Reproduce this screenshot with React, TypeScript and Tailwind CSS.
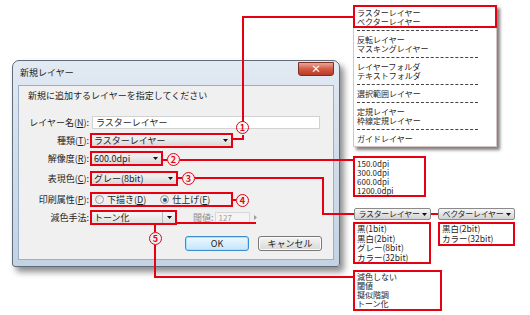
import React from "react";

function Arrow({ color = "#111" }: { color?: string }) {
  return (
    <svg width="5" height="3" viewBox="0 0 5 3" className="shrink-0">
      <path d="M0 0H5L2.5 3Z" fill={color} />
    </svg>
  );
}

function RedBox({ className, children }: { className?: string; children?: React.ReactNode }) {
  return <div className={`border-2 border-[#e60012] ${className ?? ""}`}>{children}</div>;
}

function Select({ text }: { text: string }) {
  return (
    <div className="h-full flex items-center justify-between pl-[2px] pr-[3px] bg-gradient-to-b from-[#f6f6f6] to-[#d9d9d9]">
      <span>{text}</span>
      <Arrow />
    </div>
  );
}

function Label({ children }: { children: React.ReactNode }) {
  return <div className="w-[71px] pr-[1px] text-right shrink-0">{children}</div>;
}

function Radio({ checked }: { checked?: boolean }) {
  return (
    <span className="w-[9px] h-[9px] rounded-full border border-[#9a9a9a] bg-gradient-to-br from-[#dedede] to-[#ffffff] flex items-center justify-center shrink-0">
      {checked && <span className="w-[4px] h-[4px] rounded-full bg-[#24548a]" />}
    </span>
  );
}

function Circle({ n, className }: { n: string; className: string }) {
  return (
    <span
      className={`absolute w-[13px] h-[13px] rounded-full border-[1.5px] border-[#e60012] text-[#e60012] text-[9px] leading-none font-bold flex items-center justify-center ${className}`}
    >
      {n}
    </span>
  );
}

function Sep() {
  return (
    <div className="h-[9px] flex items-center">
      <div className="w-[121px] border-t border-dashed border-[#444]" />
    </div>
  );
}

function LayerButton({ text, className }: { text: string; className: string }) {
  return (
    <div
      className={`absolute h-[12px] rounded-[2px] border border-[#8a8a8a] bg-gradient-to-b from-[#f6f6f6] to-[#d2d2d2] flex items-center justify-center gap-[2px] text-[8px] leading-none tracking-[-0.3px] ${className}`}
    >
      <span>{text}</span>
      <Arrow />
    </div>
  );
}

export default function App() {
  return (
    <div className="relative w-[530px] h-[315px] bg-white overflow-hidden font-['Noto_Sans_CJK_JP',sans-serif] text-[#1e1e1e]">
      {/* dialog window */}
      <div className="absolute left-[12px] top-[60px] w-[328px] h-[207px] rounded-t-[7px] rounded-b-[3px] border border-[#5f6c7a] bg-gradient-to-b from-[#e2eaf3] via-[#d0dcea] to-[#c3d3e4] shadow-[4px_5px_6px_rgba(0,0,0,0.45)] flex flex-col">
        <div className="relative h-[24px] flex items-center pl-[7px] text-[9px]">
          新規レイヤー
          <div className="absolute right-[5px] top-[1px] w-[36px] h-[14px] rounded-b-[3px] border border-[#7a3024] bg-gradient-to-b from-[#eaa596] via-[#d35a45] to-[#b93a24] flex items-center justify-center text-white text-[10px] font-bold leading-none">
            ×
          </div>
        </div>

        <div className="flex-1 mx-[5px] mb-[6px] bg-[#f0f0f0] border border-[#9bb0c7] flex flex-col text-[9px] leading-[12px]">
          <div className="pl-[9px] pt-[4px]">新規に追加するレイヤーを指定してください</div>

          <div className="flex items-center h-[15px] mt-[13px]">
            <Label>
              レイヤー名(<u>N</u>):
            </Label>
            <div className="ml-[2px] w-[228px] h-[13px] bg-white border border-[#d2d2d2] pl-[3px] flex items-center">
              ラスターレイヤー
            </div>
          </div>

          <div className="flex items-center h-[15px] mt-[3px]">
            <Label>
              種類(<u>T</u>):
            </Label>
            <RedBox className="w-[143px] h-[15px]">
              <Select text="ラスターレイヤー" />
            </RedBox>
          </div>

          <div className="flex items-center h-[15px] mt-[3px]">
            <Label>
              解像度(<u>R</u>):
            </Label>
            <RedBox className="w-[73px] h-[15px]">
              <Select text="600.0dpi" />
            </RedBox>
          </div>

          <div className="flex items-center h-[15px] mt-[5px]">
            <Label>
              表現色(<u>C</u>):
            </Label>
            <RedBox className="w-[88px] h-[15px]">
              <Select text="グレー(8bit)" />
            </RedBox>
          </div>

          <div className="flex items-center h-[15px] mt-[6px]">
            <Label>
              印刷属性(<u>P</u>):
            </Label>
            <RedBox className="w-[143px] h-[15px] flex items-center pl-[3px]">
              <Radio />
              <span className="ml-[3px]">
                下描き(<u>D</u>)
              </span>
              <span className="ml-[14px]">
                <Radio checked />
              </span>
              <span className="ml-[3px]">
                仕上げ(<u>F</u>)
              </span>
            </RedBox>
          </div>

          <div className="flex items-center h-[15px] mt-[3px]">
            <Label>減色手法:</Label>
            <RedBox className="w-[87px] h-[15px]">
              <div className="h-full flex bg-gradient-to-b from-[#f8f8f8] to-[#e0e0e0]">
                <div className="flex-1 pl-[2px] flex items-center border-r border-[#b9b9b9]">トーン化</div>
                <div className="w-[12px] flex items-center justify-center">
                  <Arrow />
                </div>
              </div>
            </RedBox>
            <span className="ml-[16px] text-[#8c8c8c]">閾値:</span>
            <div className="ml-[1px] w-[35px] h-[12px] bg-[#f4f4f4] border border-[#d8d8d8] text-[#a0a0a0] pl-[3px] flex items-center text-[8px]">
              127
            </div>
            <svg width="3" height="5" viewBox="0 0 3 5" className="ml-[4px]">
              <path d="M0 0L3 2.5L0 5Z" fill="#9a9a9a" />
            </svg>
          </div>

          <div className="flex justify-end gap-[9px] pr-[11px] mt-[11px]">
            <div className="w-[64px] h-[15px] rounded-[3px] border border-[#3c8dd0] bg-gradient-to-b from-[#eef8fe] to-[#c4e6fa] shadow-[inset_0_0_0_1px_#a8e2ff] flex items-center justify-center">
              OK
            </div>
            <div className="w-[64px] h-[15px] rounded-[3px] border border-[#777] bg-gradient-to-b from-[#f5f5f5] to-[#d8d8d8] shadow-[inset_0_0_0_1px_#fcfcfc] flex items-center justify-center">
              キャンセル
            </div>
          </div>
        </div>
      </div>

      {/* layer type menu */}
      <div className="absolute left-[353px] top-[5px] w-[144px] bg-white border border-[#d6c3c3] shadow-[3px_3px_3px_rgba(0,0,0,0.5)] pt-[2px] pb-[3px] pl-[3px] text-[8px] leading-[9px]">
        <div>ラスターレイヤー</div>
        <div>ベクターレイヤー</div>
        <Sep />
        <div>反転レイヤー</div>
        <div>マスキングレイヤー</div>
        <Sep />
        <div>レイヤーフォルダ</div>
        <div>テキストフォルダ</div>
        <Sep />
        <div>選択範囲レイヤー</div>
        <Sep />
        <div>定規レイヤー</div>
        <div>枠線定規レイヤー</div>
        <Sep />
        <div>ガイドレイヤー</div>
      </div>
      <RedBox className="absolute left-[353px] top-[5px] w-[144px] h-[23px]" />

      {/* resolution list */}
      <RedBox className="absolute left-[353px] top-[156px] w-[73px] h-[41px] bg-white pl-[2px] pt-[1px] text-[8px] leading-[9px]">
        <div>150.0dpi</div>
        <div>300.0dpi</div>
        <div>600.0dpi</div>
        <div>1200.0dpi</div>
      </RedBox>

      {/* colour mode per layer type */}
      <LayerButton text="ラスターレイヤー" className="left-[354px] top-[208px] w-[77px]" />
      <LayerButton text="ベクターレイヤー" className="left-[438px] top-[208px] w-[77px]" />

      <RedBox className="absolute left-[353px] top-[222px] w-[78px] h-[42px] bg-white pl-[2px] text-[8.5px] leading-[9.5px]">
        <div>黒(1bit)</div>
        <div>黒白(2bit)</div>
        <div>グレー(8bit)</div>
        <div>カラー(32bit)</div>
      </RedBox>
      <RedBox className="absolute left-[438px] top-[222px] w-[77px] h-[24px] bg-white pl-[2px] text-[8.5px] leading-[9.5px]">
        <div>黒白(2bit)</div>
        <div>カラー(32bit)</div>
      </RedBox>

      {/* reduction methods */}
      <RedBox className="absolute left-[353px] top-[270px] w-[89px] h-[41px] bg-white pl-[2px] text-[8px] leading-[9px]">
        <div>減色しない</div>
        <div>閾値</div>
        <div>擬似階調</div>
        <div>トーン化</div>
      </RedBox>

      {/* connector lines */}
      <svg
        className="absolute left-0 top-0 pointer-events-none"
        width="530"
        height="315"
        viewBox="0 0 530 315"
        fill="none"
        stroke="#e60012"
        strokeWidth="2"
        shapeRendering="crispEdges"
      >
        <path d="M233 139H243V135" />
        <path d="M243 122V17H353" />
        <path d="M163 160H167" />
        <path d="M180 160H353" />
        <path d="M178 178H182" />
        <path d="M195 178H323V214H354" />
        <path d="M233 200H236" />
        <path d="M155 225V232" />
        <path d="M155 245V277H353" />
        <path d="M177 223H256" />
        <path d="M431 214H438" />
      </svg>

      <Circle n="1" className="left-[236px] top-[121px]" />
      <Circle n="2" className="left-[167px] top-[153px]" />
      <Circle n="3" className="left-[182px] top-[172px]" />
      <Circle n="4" className="left-[236px] top-[194px]" />
      <Circle n="5" className="left-[149px] top-[232px]" />
    </div>
  );
}
